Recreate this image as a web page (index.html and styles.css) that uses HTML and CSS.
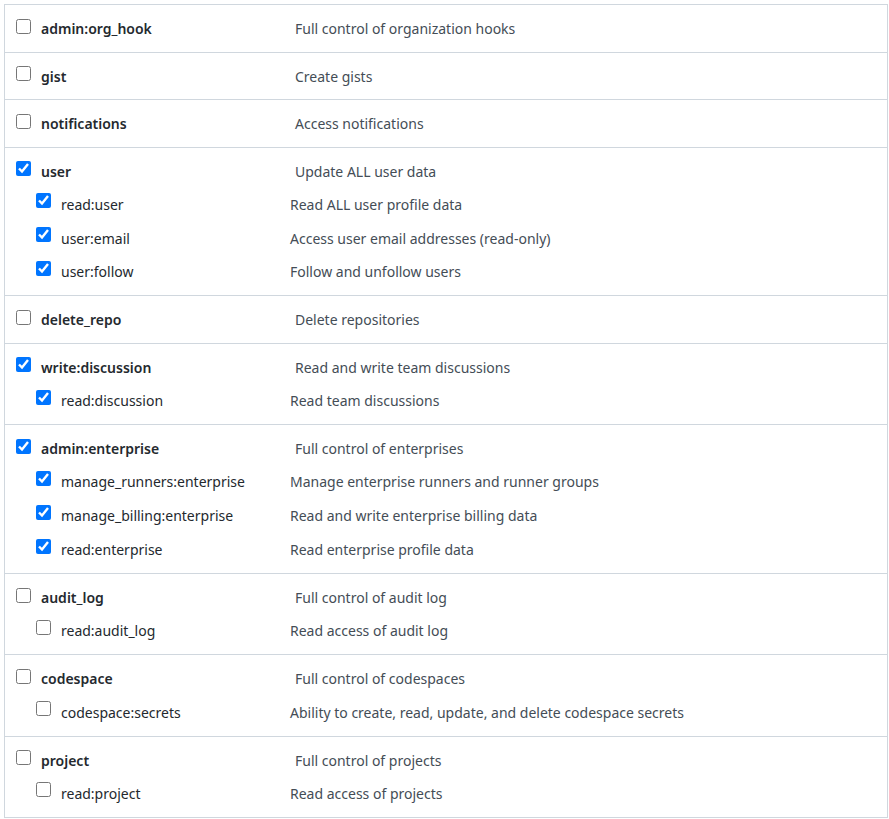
FILE: index.html
```html
<!DOCTYPE html>
<html>
<head>
<meta charset="utf-8">
<link rel="stylesheet" href="styles.css">
</head>
<body>
<div class="scopes">
  <div class="group">
    <label class="row parent"><input type="checkbox"><span class="name">admin:org_hook</span><span class="desc">Full control of organization hooks</span></label>
  </div>
  <div class="group">
    <label class="row parent"><input type="checkbox"><span class="name">gist</span><span class="desc">Create gists</span></label>
  </div>
  <div class="group">
    <label class="row parent"><input type="checkbox"><span class="name">notifications</span><span class="desc">Access notifications</span></label>
  </div>
  <div class="group">
    <label class="row parent"><input type="checkbox" checked><span class="name">user</span><span class="desc">Update ALL user data</span></label>
    <label class="row child"><input type="checkbox" checked><span class="name">read:user</span><span class="desc">Read ALL user profile data</span></label>
    <label class="row child"><input type="checkbox" checked><span class="name">user:email</span><span class="desc">Access user email addresses (read-only)</span></label>
    <label class="row child"><input type="checkbox" checked><span class="name">user:follow</span><span class="desc">Follow and unfollow users</span></label>
  </div>
  <div class="group">
    <label class="row parent"><input type="checkbox"><span class="name">delete_repo</span><span class="desc">Delete repositories</span></label>
  </div>
  <div class="group">
    <label class="row parent"><input type="checkbox" checked><span class="name">write:discussion</span><span class="desc">Read and write team discussions</span></label>
    <label class="row child"><input type="checkbox" checked><span class="name">read:discussion</span><span class="desc">Read team discussions</span></label>
  </div>
  <div class="group">
    <label class="row parent"><input type="checkbox" checked><span class="name">admin:enterprise</span><span class="desc">Full control of enterprises</span></label>
    <label class="row child"><input type="checkbox" checked><span class="name">manage_runners:enterprise</span><span class="desc">Manage enterprise runners and runner groups</span></label>
    <label class="row child"><input type="checkbox" checked><span class="name">manage_billing:enterprise</span><span class="desc">Read and write enterprise billing data</span></label>
    <label class="row child"><input type="checkbox" checked><span class="name">read:enterprise</span><span class="desc">Read enterprise profile data</span></label>
  </div>
  <div class="group">
    <label class="row parent"><input type="checkbox"><span class="name">audit_log</span><span class="desc">Full control of audit log</span></label>
    <label class="row child"><input type="checkbox"><span class="name">read:audit_log</span><span class="desc">Read access of audit log</span></label>
  </div>
  <div class="group">
    <label class="row parent"><input type="checkbox"><span class="name">codespace</span><span class="desc">Full control of codespaces</span></label>
    <label class="row child"><input type="checkbox"><span class="name">codespace:secrets</span><span class="desc">Ability to create, read, update, and delete codespace secrets</span></label>
  </div>
  <div class="group">
    <label class="row parent"><input type="checkbox"><span class="name">project</span><span class="desc">Full control of projects</span></label>
    <label class="row child"><input type="checkbox"><span class="name">read:project</span><span class="desc">Read access of projects</span></label>
  </div>
</div>
</body>
</html>
```

FILE: styles.css
```css
html, body {
  margin: 0;
  padding: 0;
  background: #ffffff;
}

body {
  font-family: "Noto Sans", "Open Sans", sans-serif;
  font-size: 14px;
  color: #24292e;
}

.scopes {
  margin: 4px 1px 0 4px;
  border: 1px solid #d0d7de;
  border-bottom: none;
}

.group {
  border-bottom: 1px solid #d0d7de;
  padding-bottom: 7.5px;
}

.row {
  display: flex;
  align-items: flex-start;
  line-height: 20px;
}

.row input {
  width: 15px;
  height: 15px;
  margin: 0;
  flex: none;
  accent-color: #0075ff;
}

.parent {
  padding: 14px 0 5px 11px;
}

.parent input {
  margin-top: -0.5px;
}

.parent .name {
  font-weight: 600;
  margin-left: 10px;
  width: 254px;
}

.child {
  height: 33.8px;
  box-sizing: border-box;
  padding: 8.3px 0 5.5px 31px;
}

.child input {
  margin-top: -1.5px;
}

.child .name {
  margin-left: 10px;
  width: 229px;
}

.desc {
  color: #444d56;
}
```
